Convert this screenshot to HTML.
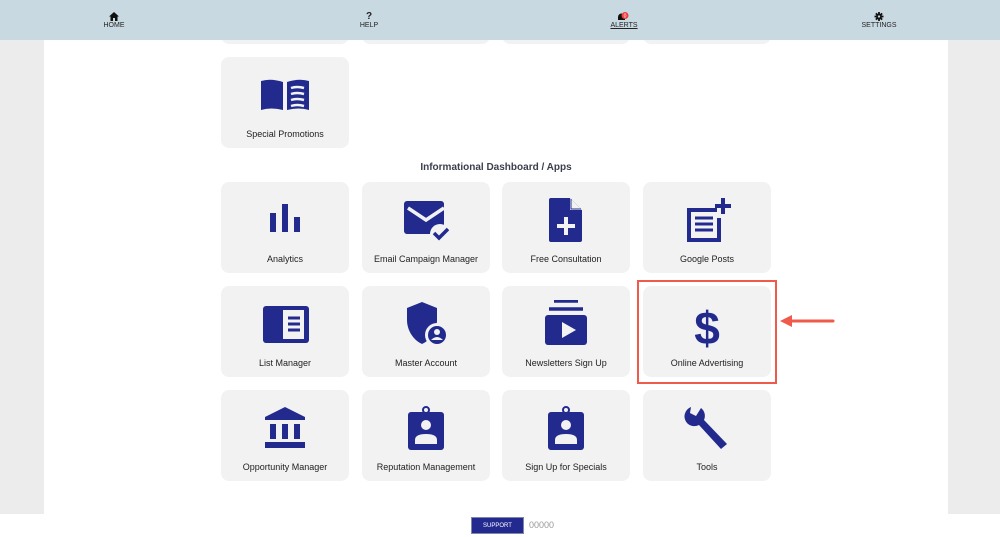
<!DOCTYPE html>
<html><head><meta charset="utf-8"><style>
*{margin:0;padding:0;box-sizing:border-box}
body{width:1000px;height:537px;position:relative;overflow:hidden;background:#fff;font-family:"Liberation Sans",Arial,sans-serif}
.bg{position:absolute;left:0;top:0;width:1000px;height:514px;background:#ececec}
.panel{position:absolute;left:44px;top:0;width:904px;height:514px;background:#fff}
.hdr{position:absolute;left:0;top:0;width:1000px;height:40px;background:#c9d9e1;z-index:5}
.nav{position:absolute;top:12px;width:60px;margin-left:-30px;text-align:center;font-size:7px;color:#222;line-height:8px}
.nav svg{display:block;margin:0 auto 1px}
.card{position:absolute;width:128px;height:91px;background:#f2f2f2;border-radius:8px}
.card svg{position:absolute;left:40px;top:14px;width:48px;height:48px}
.card span{position:absolute;left:0;right:0;top:72px;text-align:center;font-size:9px;color:#222}
h3{position:absolute;left:0;width:992px;top:162px;text-align:center;font-size:10px;font-weight:bold;color:#3b3f4c}
.red{position:absolute;left:637px;top:280px;width:140px;height:104px;border:2px solid #f05a4a}
</style></head><body>
<div class="bg"></div><div class="panel"></div>
<div class="hdr">
<div class="nav" style="left:114px"><svg width="10" height="9" viewBox="0 0 10 9"><path d="M5 0L0 4.5h1.5V9h2.5V6h2v3h2.5V4.5H10z" fill="#111"/></svg>HOME</div>
<div class="nav" style="left:369px"><div style="font-weight:bold;font-size:10px;line-height:10px">?</div>HELP</div>
<div class="nav" style="left:624px"><svg width="14" height="9" viewBox="0 0 14 9"><path d="M1 8h7V5a3 3 0 0 0-7 0z" fill="#111"/><circle cx="8" cy="3.5" r="3.5" fill="#f23b3b"/><text x="8" y="5.5" font-size="5" fill="#fff" text-anchor="middle">0</text></svg><u>ALERTS</u></div>
<div class="nav" style="left:879px"><svg width="10" height="9" viewBox="0 0 10 10"><path d="M5 0v10M0 5h10M1.5 1.5l7 7M8.5 1.5l-7 7" stroke="#111" stroke-width="2"/><circle cx="5" cy="5" r="3.3" fill="#111"/><circle cx="5" cy="5" r="1.3" fill="#c9d9e1"/></svg>SETTINGS</div>
</div>

<div class="card" style="left:221px;top:-47px"></div>
<div class="card" style="left:362px;top:-47px"></div>
<div class="card" style="left:502px;top:-47px"></div>
<div class="card" style="left:643px;top:-47px"></div>

<div class="card" style="left:221px;top:57px"><svg viewBox="0 0 48 48"><path d="M0 10q10-3 22 1v28q-12-3-22 0z" fill="#222a8e"/><path d="M26 11q12-4 22-1v29q-10-3-22 0z" fill="#222a8e"/><path d="M30 17q6-2 13 0M30 23q6-2 13 0M30 29q6-2 13 0M30 35q6-2 13 0" stroke="#f2f2f2" stroke-width="2.5" fill="none"/></svg><span>Special Promotions</span></div>
<h3>Informational Dashboard / Apps</h3>

<div class="card" style="left:221px;top:182px"><svg viewBox="0 0 48 48"><path d="M9 17h6v19H9zM21 8h6v28h-6zM33 21h6v15h-6z" fill="#222a8e"/></svg><span>Analytics</span></div>
<div class="card" style="left:362px;top:182px"><svg viewBox="0 0 48 48"><rect x="2" y="5" width="40" height="33" rx="3" fill="#222a8e"/><path d="M6 12l18 12 18-12" stroke="#f2f2f2" stroke-width="3.5" fill="none"/><circle cx="38" cy="38" r="10" fill="#f2f2f2"/><path d="M32 37l5 5 9-9" stroke="#222a8e" stroke-width="3.5" fill="none"/></svg><span>Email Campaign Manager</span></div>
<div class="card" style="left:502px;top:182px"><svg viewBox="0 0 48 48"><path d="M9 2h19l12 12v30a2 2 0 0 1-2 2H9a2 2 0 0 1-2-2V4a2 2 0 0 1 2-2z" fill="#222a8e"/><path d="M28 2v12h12z" fill="#f2f2f2"/><path d="M29 3v10h10" fill="none" stroke="#222a8e"/><path d="M24 21v18M15 30h18" stroke="#f2f2f2" stroke-width="4"/></svg><span>Free Consultation</span></div>
<div class="card" style="left:643px;top:182px"><svg viewBox="0 0 48 48"><path d="M34 14H6v30h30V22" fill="none" stroke="#222a8e" stroke-width="4"/><path d="M12 22h18M12 28h18M12 34h18" stroke="#222a8e" stroke-width="3"/><path d="M40 2v16M32 10h16" stroke="#222a8e" stroke-width="4"/></svg><span>Google Posts</span></div>

<div class="card" style="left:221px;top:286px"><svg viewBox="0 0 48 48"><rect x="2" y="6" width="46" height="37" rx="3" fill="#222a8e"/><rect x="22" y="10" width="21" height="29" fill="#f2f2f2"/><path d="M27 18h12M27 24h12M27 30h12" stroke="#222a8e" stroke-width="3"/></svg><span>List Manager</span></div>
<div class="card" style="left:362px;top:286px"><svg viewBox="0 0 48 48"><path d="M20 2l15 6v12c0 10-6 20-15 24C11 40 5 30 5 20V8z" fill="#222a8e"/><circle cx="35" cy="35" r="12" fill="#f2f2f2"/><circle cx="35" cy="35" r="9" fill="#222a8e"/><circle cx="35" cy="32" r="3" fill="#f2f2f2"/><path d="M29 40q6-6 12 0" fill="#f2f2f2"/></svg><span>Master Account</span></div>
<div class="card" style="left:502px;top:286px"><svg viewBox="0 0 48 48"><path d="M12 1h24M7 9h34" stroke="#222a8e" stroke-width="3.5"/><rect x="3" y="15" width="42" height="30" rx="3" fill="#222a8e"/><path d="M20 22v16l14-8z" fill="#f2f2f2"/></svg><span>Newsletters Sign Up</span></div>
<div class="card" style="left:643px;top:286px"><svg viewBox="0 0 48 48"><text x="24" y="44" font-size="46" font-weight="bold" text-anchor="middle" fill="#222a8e" font-family="Liberation Sans">$</text></svg><span>Online Advertising</span></div>

<div class="card" style="left:221px;top:390px"><svg viewBox="0 0 48 48"><path d="M24 3L4 13v3h40v-3z" fill="#222a8e"/><path d="M9 20h6v15H9zM21 20h6v15h-6zM33 20h6v15h-6zM4 38h40v6H4z" fill="#222a8e"/></svg><span>Opportunity Manager</span></div>
<div class="card" style="left:362px;top:390px"><svg viewBox="0 0 48 48"><circle cx="24" cy="6" r="3" fill="none" stroke="#222a8e" stroke-width="2"/><rect x="6" y="8" width="36" height="38" rx="3" fill="#222a8e"/><circle cx="24" cy="21" r="5" fill="#f2f2f2"/><path d="M13 40v-4q0-6 11-6t11 6v4z" fill="#f2f2f2"/></svg><span>Reputation Management</span></div>
<div class="card" style="left:502px;top:390px"><svg viewBox="0 0 48 48"><circle cx="24" cy="6" r="3" fill="none" stroke="#222a8e" stroke-width="2"/><rect x="6" y="8" width="36" height="38" rx="3" fill="#222a8e"/><circle cx="24" cy="21" r="5" fill="#f2f2f2"/><path d="M13 40v-4q0-6 11-6t11 6v4z" fill="#f2f2f2"/></svg><span>Sign Up for Specials</span></div>
<div class="card" style="left:643px;top:390px"><svg viewBox="0 0 48 48"><path d="M8 3a10 10 0 0 0-4 16 10 10 0 0 0 12 2l22 24 6-5L21 16a10 10 0 0 0-3-12l-5 8-6-3z" fill="#222a8e"/></svg><span>Tools</span></div>

<div class="red"></div>
<svg style="position:absolute;left:778px;top:314px" width="58" height="14" viewBox="0 0 58 14"><path d="M12 7h43" stroke="#f05a4a" stroke-width="3" stroke-linecap="round"/><path d="M2 7l12-6v12z" fill="#f05a4a"/></svg>

<div style="position:absolute;left:471px;top:517px;width:53px;height:17px;background:#232a8f;border:1px solid #7f86a8;color:#fff;font-size:6px;text-align:center;line-height:16px">SUPPORT</div>
<div style="position:absolute;left:529px;top:520px;font-size:9px;color:#999">00000</div>
</body></html>
